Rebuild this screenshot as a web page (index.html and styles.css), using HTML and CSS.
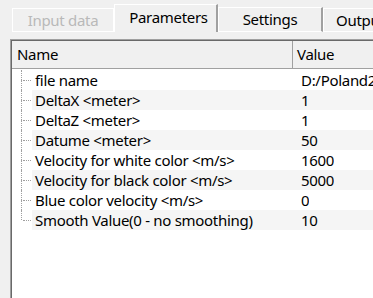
FILE: index.html
```html
<!DOCTYPE html>
<html lang="en">

<head>
    <meta charset="UTF-8">
    <title>Parameters</title>
    <link rel="stylesheet" href="styles.css">
</head>

<body>
    <div class="tabs">
        <div class="tab disabled">Input data</div>
        <div class="tab current">Parameters</div>
        <div class="tab">Settings</div>
        <div class="tab last">Output</div>
    </div>

    <div class="pane">
        <div class="tree">
            <div class="header">
                <div class="col-name">Name</div>
                <div class="col-value">Value</div>
            </div>

            <div class="row">
                <div class="branch"><i class="up"></i><i class="across"></i><i class="down"></i><i></i></div>
                <div class="name">file name</div>
                <div class="value">D:/Poland2D/test.sgy</div>
            </div>
            <div class="row alt">
                <div class="branch"><i class="up"></i><i class="across"></i><i class="down"></i><i></i></div>
                <div class="name">DeltaX &lt;meter&gt;</div>
                <div class="value">1</div>
            </div>
            <div class="row">
                <div class="branch"><i class="up"></i><i class="across"></i><i class="down"></i><i></i></div>
                <div class="name">DeltaZ &lt;meter&gt;</div>
                <div class="value">1</div>
            </div>
            <div class="row alt">
                <div class="branch"><i class="up"></i><i class="across"></i><i class="down"></i><i></i></div>
                <div class="name">Datume &lt;meter&gt;</div>
                <div class="value">50</div>
            </div>
            <div class="row">
                <div class="branch"><i class="up"></i><i class="across"></i><i class="down"></i><i></i></div>
                <div class="name">Velocity for white color &lt;m/s&gt;</div>
                <div class="value">1600</div>
            </div>
            <div class="row alt">
                <div class="branch"><i class="up"></i><i class="across"></i><i class="down"></i><i></i></div>
                <div class="name">Velocity for black color &lt;m/s&gt;</div>
                <div class="value">5000</div>
            </div>
            <div class="row">
                <div class="branch"><i class="up"></i><i class="across"></i><i class="down"></i><i></i></div>
                <div class="name">Blue color velocity &lt;m/s&gt;</div>
                <div class="value">0</div>
            </div>
            <div class="row alt">
                <div class="branch"><i class="up"></i><i class="across"></i><i></i><i></i></div>
                <div class="name">Smooth Value(0 - no smoothing)</div>
                <div class="value">10</div>
            </div>
        </div>
    </div>
</body>

</html>
```

FILE: styles.css
```css
body {
    margin: 0;
    width: 373px;
    height: 298px;
    overflow: hidden;
    background-color: #f0f0f0;
    font-family: 'Noto Sans', 'Open Sans', sans-serif;
    font-size: 15px;
    letter-spacing: -0.3px;
    color: #000;
}

.tabs {
    display: flex;
    align-items: flex-end;
    height: 32px;
    padding-left: 12px;
}

.tab {
    box-sizing: border-box;
    flex: none;
    height: 24px;
    padding-top: 1px;
    text-align: center;
    line-height: 20px;
    white-space: nowrap;
    border-top: 1px solid #fff;
    border-left: 1px solid #fff;
    border-right: 2px solid #a0a0a0;
    border-bottom: 1px solid #fff;
}

.tab.disabled {
    width: 102px;
    color: #b9b9b9;
    border-right: 1px solid #fff;
}

.tab.current {
    width: 104px;
    height: 28px;
    border-bottom: none;
    padding-top: 2px;
    padding-left: 6px;
}

.tab:nth-child(3) {
    width: 105px;
    height: 25px;
}

.tab.last {
    width: 80px;
    text-align: left;
    padding-left: 12px;
}

.pane {
    margin-left: 10px;
    padding-top: 7px;
}

.tree {
    height: 300px;
    background-color: #fff;
    border-top: 1px solid #a0a0a0;
    border-left: 1px solid #a0a0a0;
    box-shadow: inset 1px 1px 0 #696969;
}

.header {
    display: flex;
    height: 27px;
    margin-left: 1px;
    margin-top: 1px;
    background-color: #f0f0f0;
    border-bottom: 1px solid #a0a0a0;
    line-height: 27px;
    white-space: nowrap;
}

.col-name {
    width: 275px;
    flex: none;
    padding-left: 5px;
    border-right: 1px solid #a0a0a0;
}

.col-value {
    padding-left: 4px;
}

.row {
    display: flex;
    height: 20px;
    line-height: 20px;
    white-space: nowrap;
    margin-left: 1px;
}

.header + .row {
    margin-top: 1px;
}

.branch {
    display: grid;
    grid-template-columns: 10px 10px;
    grid-template-rows: 10px 10px;
    width: 20px;
    flex: none;
    background-color: #fff;
}

.branch i {
    display: block;
}

.branch .up {
    border-right: 1px dotted #a0a0a0;
}

.branch .down {
    border-right: 1px dotted #a0a0a0;
}

.branch .across {
    border-bottom: 1px dotted #a0a0a0;
    margin-bottom: -1px;
    margin-left: 1px;
    width: 8px;
}

.row.alt {
    background-color: #f5f5f5;
}

.name {
    width: 261px;
    flex: none;
    padding-left: 3px;
    overflow: hidden;
}

.value {
    padding-left: 5px;
    overflow: hidden;
}
```
